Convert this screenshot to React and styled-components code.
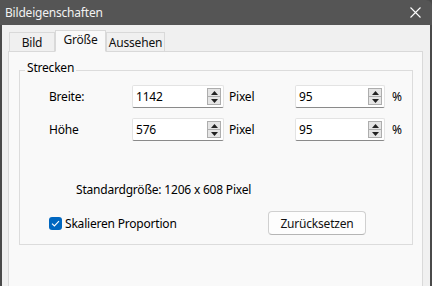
import React from 'react'
import styled, { createGlobalStyle } from 'styled-components'

const Global = createGlobalStyle`
  html, body {
    margin: 0;
    padding: 0;
    background: #4a4a4a;
  }
  body {
    font-family: "Noto Sans", "Open Sans", sans-serif;
    font-size: 12px;
    letter-spacing: -0.2px;
    color: #000;
  }
`;

function Spinner() {
  return (
    <SpinBox>
      <SpinButton>
        <svg width="7" height="4" viewBox="0 0 7 4"><path d="M0 4 L3.5 0 L7 4 Z" fill="#222" /></svg>
      </SpinButton>
      <SpinButton>
        <svg width="7" height="4" viewBox="0 0 7 4"><path d="M0 0 L3.5 4 L7 0 Z" fill="#222" /></svg>
      </SpinButton>
    </SpinBox>
  )
}

function NumberField({ value, width }) {
  return (
    <Field $width={width}>
      <FieldText>{value}</FieldText>
      <Spinner />
    </Field>
  )
}

function App() {
  return (
    <>
      <Global />
      <Window>
        <TitleBar>
          <Title>Bildeigenschaften</Title>
          <Close>
            <svg width="11" height="11" viewBox="0 0 11 11">
              <path d="M0.5 0.5 L10.5 10.5 M10.5 0.5 L0.5 10.5" stroke="#fff" strokeWidth="1.1" />
            </svg>
          </Close>
        </TitleBar>

        <Body>
          <TabRow>
            <Tab $width={46}>Bild</Tab>
            <Tab $width={51} $active>Größe</Tab>
            <Tab $width={59}>Aussehen</Tab>
          </TabRow>

          <Panel>
            <Group>
              <Legend>Strecken</Legend>
              <FormGrid>
                <Label>Breite:</Label>
                <NumberField value="1142" width={92} />
                <Unit>Pixel</Unit>
                <NumberField value="95" width={90} />
                <Percent>%</Percent>

                <Label>Höhe</Label>
                <NumberField value="576" width={92} />
                <Unit>Pixel</Unit>
                <NumberField value="95" width={90} />
                <Percent>%</Percent>
              </FormGrid>

              <Info>Standardgröße: 1206 x 608 Pixel</Info>

              <BottomRow>
                <CheckLabel>
                  <CheckBox>
                    <svg width="9" height="7" viewBox="0 0 9 7">
                      <path d="M1 3.6 L3.4 6 L8 1.2" stroke="#fff" strokeWidth="1.1" fill="none" />
                    </svg>
                  </CheckBox>
                  Skalieren Proportion
                </CheckLabel>
                <Button type="button">Zurücksetzen</Button>
              </BottomRow>
            </Group>
          </Panel>
        </Body>
      </Window>
    </>
  )
}

const Window = styled.div`
  width: 432px;
  height: 286px;
  display: flex;
  flex-direction: column;
  overflow: hidden;
`;

const TitleBar = styled.div`
  height: 25px;
  flex: none;
  background: #555555;
  border-top-right-radius: 6px;
  display: flex;
  align-items: center;
  justify-content: space-between;
  padding: 0 11px 1px 5px;
  box-sizing: border-box;
`;

const Title = styled.span`
  color: #f2f2f2;
  font-size: 12px;
`;

const Close = styled.span`
  display: flex;
  align-items: center;
`;

const Body = styled.div`
  flex: 1;
  margin: 0 2px 0 2px;
  background: #f0f0f0;
  padding: 6px 7px 0 6px;
  display: flex;
  flex-direction: column;
  min-height: 0;
`;

const TabRow = styled.div`
  display: flex;
  align-items: flex-end;
  height: 21px;
  padding-left: 1px;
  margin-bottom: -1px;
  position: relative;
  z-index: 1;
`;

const Tab = styled.div`
  width: ${p => p.$width}px;
  height: ${p => (p.$active ? 22 : 20)}px;
  box-sizing: border-box;
  border: 1px solid #d9d9d9;
  border-bottom: ${p => (p.$active ? '1px solid #f9f9f9' : '1px solid #d9d9d9')};
  background: ${p => (p.$active ? '#f9f9f9' : '#f0f0f0')};
  display: flex;
  align-items: center;
  justify-content: center;
  padding-bottom: ${p => (p.$active ? 3 : 0)}px;
  font-size: 12px;
  color: #111;
  white-space: nowrap;
`;

const Panel = styled.div`
  flex: 1;
  background: #f9f9f9;
  border: 1px solid #d9d9d9;
  border-bottom: none;
  padding: 18px 9px 0 10px;
`;

const Group = styled.div`
  position: relative;
  border: 1px solid #dcdcdc;
  height: 175px;
  box-sizing: border-box;
  padding: 14px 0 0 29px;
`;

const Legend = styled.span`
  position: absolute;
  left: 5px;
  top: -11px;
  padding: 0 2px 0 2px;
  background: #f9f9f9;
  font-size: 12px;
  line-height: 16px;
`;

const FormGrid = styled.div`
  display: grid;
  grid-template-columns: 83px 92px 71px 90px auto;
  grid-auto-rows: 23px;
  row-gap: 10px;
  align-items: center;
`;

const Label = styled.span`
  font-size: 12px;
`;

const Unit = styled.span`
  padding-left: 5px;
  font-size: 12px;
`;

const Percent = styled.span`
  padding-left: 7px;
  font-size: 12px;
`;

const Field = styled.div`
  width: ${p => p.$width}px;
  height: 23px;
  box-sizing: border-box;
  background: #fff;
  border: 1px solid #e3e3e3;
  border-bottom: 1px solid #8a8a8a;
  border-radius: 2px;
  display: flex;
  align-items: center;
  justify-content: space-between;
  padding: 0 2px 0 3px;
`;

const FieldText = styled.span`
  font-size: 12px;
`;

const SpinBox = styled.div`
  display: flex;
  flex-direction: column;
`;

const SpinButton = styled.div`
  width: 14px;
  height: 9px;
  box-sizing: border-box;
  background: #e5e5e5;
  border: 1px solid #adadad;
  display: flex;
  align-items: center;
  justify-content: center;

  & + & {
    border-top: none;
    height: 8px;
  }
`;

const Info = styled.div`
  margin-top: 41px;
  padding-left: 27px;
  font-size: 12px;
  line-height: 16px;
`;

const BottomRow = styled.div`
  margin-top: 13px;
  display: flex;
  align-items: center;
`;

const CheckLabel = styled.label`
  display: flex;
  align-items: center;
  gap: 3px;
  width: 219px;
  font-size: 12px;
`;

const CheckBox = styled.span`
  width: 13px;
  height: 13px;
  border-radius: 3px;
  background: #0067c0;
  display: flex;
  align-items: center;
  justify-content: center;
`;

const Button = styled.button`
  width: 98px;
  height: 24px;
  background: #fdfdfd;
  border: 1px solid #d0d0d0;
  border-bottom-color: #b5b5b5;
  border-radius: 4px;
  font-family: inherit;
  font-size: 12px;
  letter-spacing: inherit;
  color: #111;
  padding: 0;
`;

export default App
